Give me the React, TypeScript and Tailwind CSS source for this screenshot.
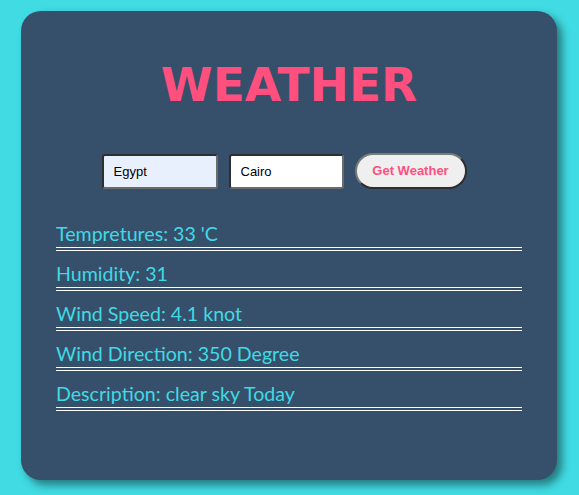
import { useState } from "react";

const rows = [
  "Tempretures: 33 'C",
  "Humidity: 31",
  "Wind Speed: 4.1 knot",
  "Wind Direction: 350 Degree",
  "Description: clear sky Today",
];

export default function App() {
  const [country, setCountry] = useState("Egypt");
  const [city, setCity] = useState("Cairo");

  return (
    <div className="min-h-[495px] w-full bg-[#41dbe3] pt-[11px]">
      <div className="ml-[21px] flex h-[469px] w-[536px] flex-col rounded-[20px] bg-[#36506b] px-[35px] pt-[46px] shadow-[5px_5px_8px_rgba(0,0,0,0.45)]">
        <h1 className="text-center font-['Comic_Sans_MS','DejaVu_Sans',sans-serif] text-[47px] font-bold leading-[56px] text-[#ff4f7f]">
          WEATHER
        </h1>

        <form
          onSubmit={(e) => e.preventDefault()}
          className="mt-[40px] flex items-center justify-center gap-[11px] pr-[10px] font-['Liberation_Sans',Arial,sans-serif] text-[13px]"
        >
          <input
            value={country}
            onChange={(e) => setCountry(e.target.value)}
            className="h-[35px] w-[116px] rounded-[3px] border-2 border-[#2e2e2e] border-b-[#6b6b6b] border-r-[#6b6b6b] bg-[#e8f0fe] px-[10px] text-black outline-none"
          />
          <input
            value={city}
            onChange={(e) => setCity(e.target.value)}
            className="h-[35px] w-[115px] rounded-[3px] border-2 border-[#2e2e2e] border-b-[#6b6b6b] border-r-[#6b6b6b] bg-white px-[10px] text-black outline-none"
          />
          <button
            type="submit"
            className="h-[36px] w-[112px] rounded-full border-2 border-[#7a7a7a] border-b-[#2e2e2e] border-r-[#2e2e2e] bg-[#efefef] font-bold text-[#ff4f7f]"
          >
            Get Weather
          </button>
        </form>

        <div className="mt-[32px] flex flex-col gap-[10px] font-['Lato','Noto_Sans',sans-serif] text-[19.6px] text-[#41d9e3]">
          {rows.map((r) => (
            <div
              key={r}
              className="border-b-4 border-double border-white leading-[26px]"
            >
              {r}
            </div>
          ))}
        </div>
      </div>
    </div>
  );
}
